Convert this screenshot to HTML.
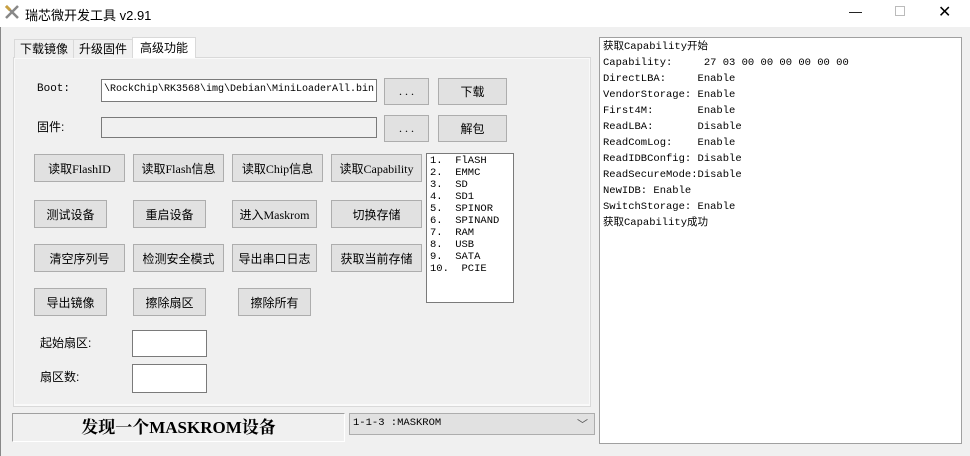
<!DOCTYPE html>
<html><head><meta charset="utf-8"><style>
*{margin:0;padding:0;box-sizing:border-box}
body{width:970px;height:456px;background:#f0f0f0;position:relative;overflow:hidden;font-family:"Liberation Sans","Noto Sans CJK SC",sans-serif;font-size:12px;color:#000}
.a{position:absolute}
.btn{position:absolute;background:#e1e1e1;border:1px solid #adadad;display:flex;align-items:center;justify-content:center;font-size:12px;font-family:"Liberation Serif","Noto Sans CJK SC",serif;white-space:nowrap}
.inp{position:absolute;background:#fff;border:1px solid #7a7a7a}
.mono{font-family:"Liberation Mono","Noto Sans CJK SC",monospace;font-size:10.5px}
</style></head><body>
<div class="a" style="left:0;top:0;width:970px;height:27px;background:#fff"></div>
<svg class="a" style="left:4px;top:4px" width="16" height="16"><path d="M2 2 L14 14 M14 2 L2 14" stroke="#888" stroke-width="2.5"/><path d="M2 2 L6 6" stroke="#c9a040" stroke-width="3"/></svg>
<div class="a" style="left:25px;top:5px;font-size:13px">瑞芯微开发工具 v2.91</div>
<div class="a" style="left:849px;top:4px;font-size:13px">—</div>
<div class="a" style="left:895px;top:6px;width:10px;height:10px;border:1px solid #bbb"></div>
<div class="a" style="left:938px;top:2px;font-size:16px">✕</div>
<div class="a" style="left:0;top:27px;width:1px;height:429px;background:#888"></div>
<div class="a" style="left:13px;top:57px;width:578px;height:350px;background:#f9f9f9;border:1px solid #d9d9d9"></div>
<div class="a" style="left:15px;top:59px;width:574px;height:345px;background:#f0f0f0"></div>
<div class="a" style="left:14px;top:39px;width:60px;height:19px;border:1px solid #d9d9d9;border-bottom:none;background:#f0f0f0;text-align:center;line-height:18px">下载镜像</div>
<div class="a" style="left:73px;top:39px;width:60px;height:19px;border:1px solid #d9d9d9;border-bottom:none;background:#f0f0f0;text-align:center;line-height:18px">升级固件</div>
<div class="a" style="left:132px;top:37px;width:64px;height:21px;border:1px solid #d9d9d9;border-bottom:none;background:#fff;text-align:center;line-height:20px">高级功能</div>
<div class="a mono" style="left:37px;top:83px;font-size:11px">Boot:</div>
<div class="inp mono" style="left:101px;top:79px;width:276px;height:23px;padding:4px 0 0 2px;font-size:10px;white-space:nowrap;overflow:hidden">\RockChip\RK3568\img\Debian\MiniLoaderAll.bin</div>
<div class="btn" style="left:384px;top:78px;width:45px;height:27px">. . .</div>
<div class="btn" style="left:438px;top:78px;width:69px;height:27px">下载</div>
<div class="a" style="left:37px;top:118px">固件:</div>
<div class="inp" style="left:101px;top:117px;width:276px;height:21px;background:#f0f0f0"></div>
<div class="btn" style="left:384px;top:115px;width:45px;height:27px">. . .</div>
<div class="btn" style="left:438px;top:115px;width:69px;height:27px">解包</div>
<div class="btn" style="left:34px;top:154px;width:91px;height:28px">读取FlashID</div>
<div class="btn" style="left:133px;top:154px;width:91px;height:28px">读取Flash信息</div>
<div class="btn" style="left:232px;top:154px;width:91px;height:28px">读取Chip信息</div>
<div class="btn" style="left:331px;top:154px;width:91px;height:28px">读取Capability</div>
<div class="btn" style="left:34px;top:200px;width:73px;height:28px">测试设备</div>
<div class="btn" style="left:133px;top:200px;width:73px;height:28px">重启设备</div>
<div class="btn" style="left:232px;top:200px;width:85px;height:28px">进入Maskrom</div>
<div class="btn" style="left:331px;top:200px;width:91px;height:28px">切换存储</div>
<div class="btn" style="left:34px;top:244px;width:91px;height:28px">清空序列号</div>
<div class="btn" style="left:133px;top:244px;width:91px;height:28px">检测安全模式</div>
<div class="btn" style="left:232px;top:244px;width:85px;height:28px">导出串口日志</div>
<div class="btn" style="left:331px;top:244px;width:91px;height:28px">获取当前存储</div>
<div class="btn" style="left:34px;top:288px;width:73px;height:28px">导出镜像</div>
<div class="btn" style="left:133px;top:288px;width:73px;height:28px">擦除扇区</div>
<div class="btn" style="left:238px;top:288px;width:73px;height:28px">擦除所有</div>
<div class="inp mono" style="left:426px;top:153px;width:88px;height:150px;padding:1px 0 0 3px;line-height:12px;font-size:10.5px;white-space:pre">1.  FlASH
2.  EMMC
3.  SD
4.  SD1
5.  SPINOR
6.  SPINAND
7.  RAM
8.  USB
9.  SATA
10.  PCIE</div>
<div class="a" style="left:40px;top:334px">起始扇区:</div>
<div class="inp" style="left:132px;top:330px;width:75px;height:27px"></div>
<div class="a" style="left:40px;top:368px">扇区数:</div>
<div class="inp" style="left:132px;top:364px;width:75px;height:29px"></div>
<div class="a" style="left:12px;top:413px;width:333px;height:29px;border:1px solid #a0a0a0;border-right-color:#fff;border-bottom-color:#fff;background:#f0f0f0;text-align:center;font-family:'Liberation Serif','Noto Serif CJK SC',serif;font-weight:bold;font-size:17px;line-height:27px">发现一个MASKROM设备</div>
<div class="a mono" style="left:349px;top:413px;width:246px;height:22px;border:1px solid #adadad;background:#e1e1e1;padding:3px 0 0 3px">1-1-3 :MASKROM<span style="position:absolute;right:6px;top:2px;font-size:11px;color:#555">﹀</span></div>
<div class="inp mono" style="left:599px;top:37px;width:363px;height:407px;border-color:#a0a0a0;padding:1px 0 0 3px;line-height:16px;white-space:pre">获取Capability开始
Capability:     27 03 00 00 00 00 00 00
DirectLBA:     Enable
VendorStorage: Enable
First4M:       Enable
ReadLBA:       Disable
ReadComLog:    Enable
ReadIDBConfig: Disable
ReadSecureMode:Disable
NewIDB: Enable
SwitchStorage: Enable
获取Capability成功</div>
</body></html>
